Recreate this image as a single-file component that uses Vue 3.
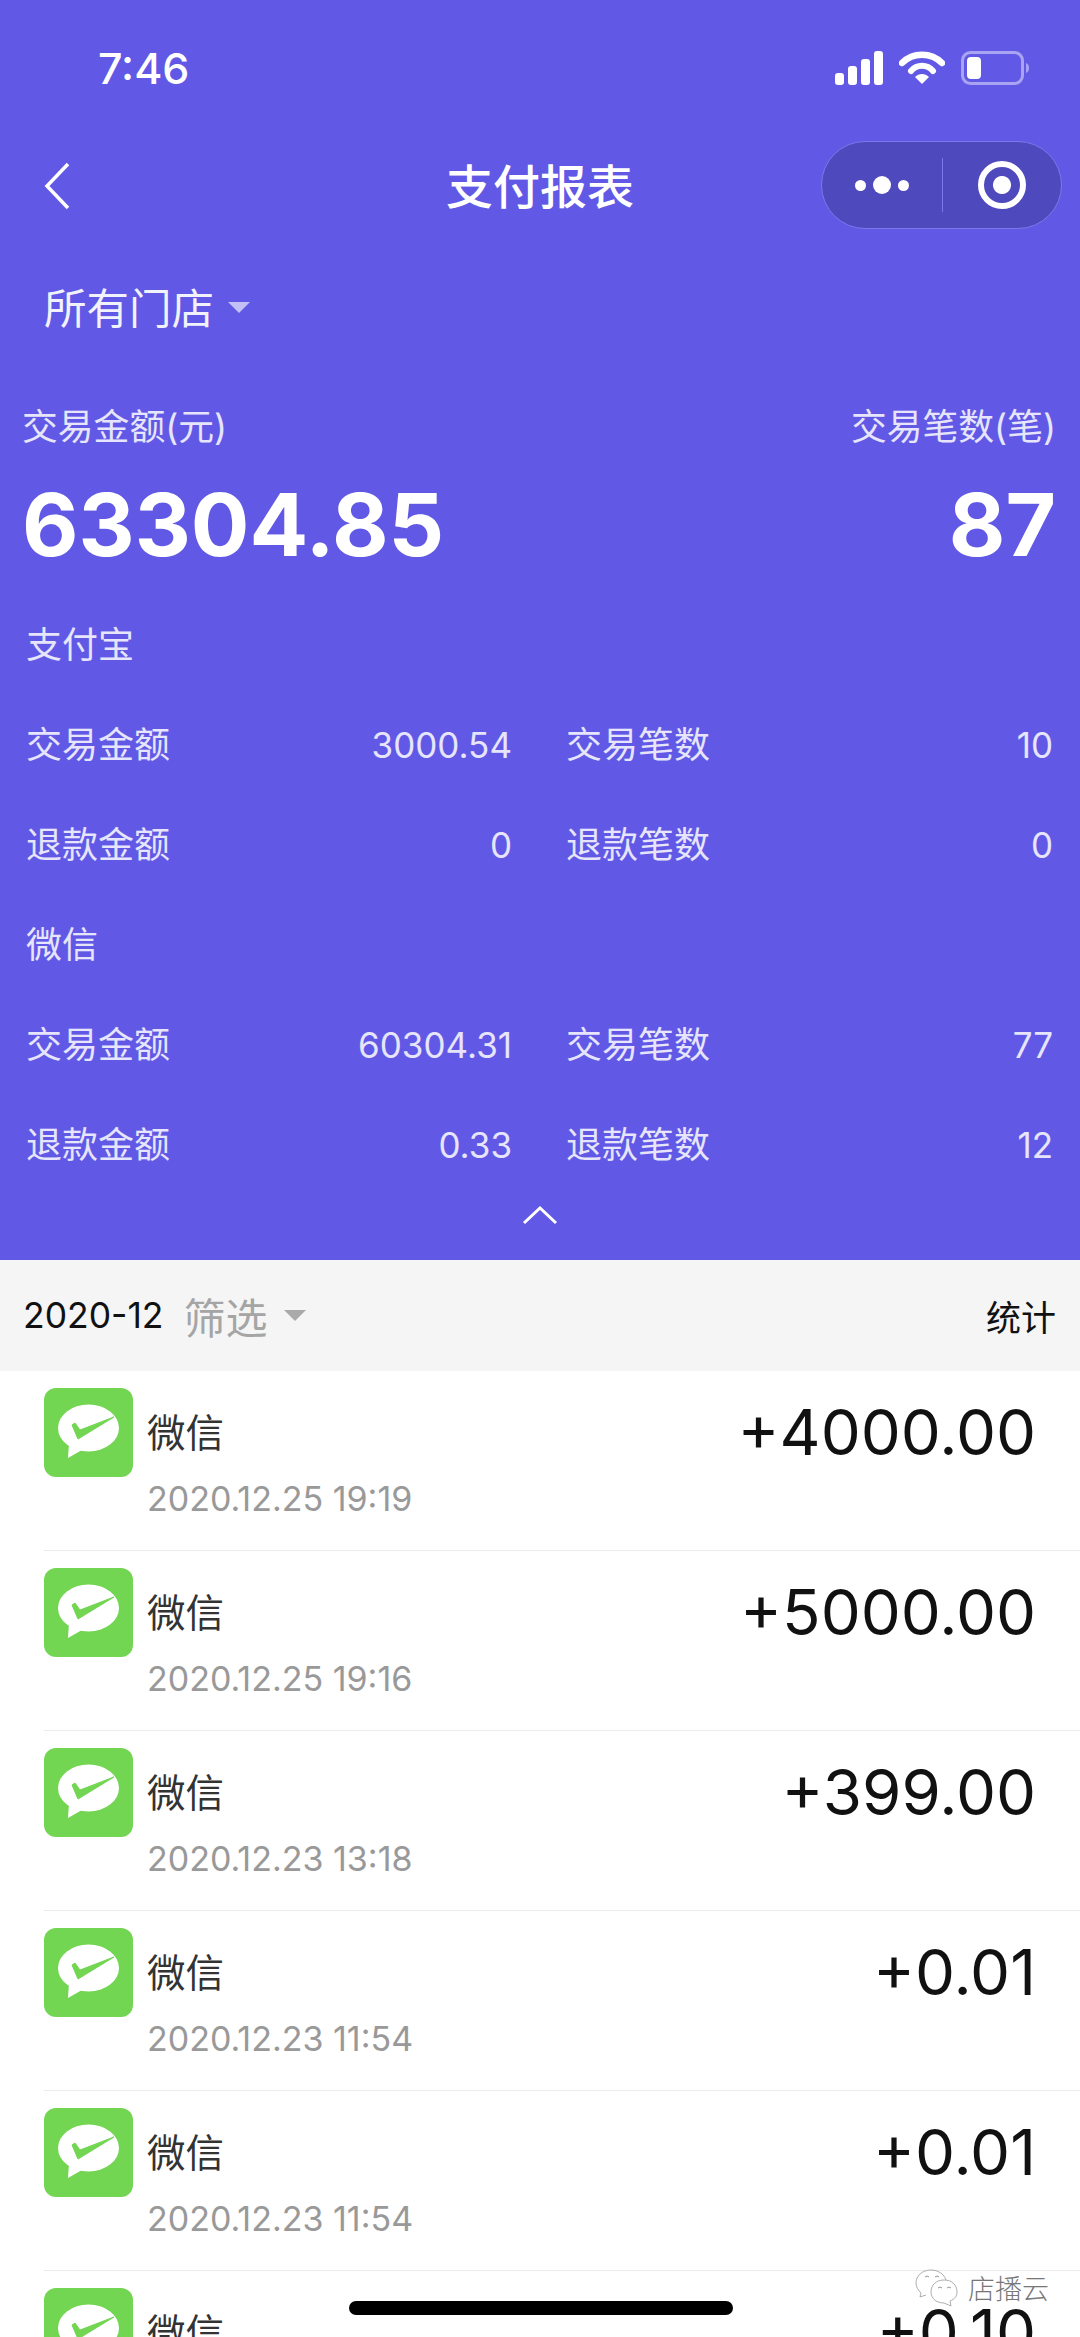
<template>
  <div class="page">
    <header class="head">
      <div class="status">
        <span class="status__time">7:46</span>
        <div class="status__icons">
          <svg width="48" height="34" viewBox="0 0 48 34">
            <rect x="0" y="22" width="9" height="12" rx="3" fill="#fff" />
            <rect x="13" y="15" width="9" height="19" rx="3" fill="#fff" />
            <rect x="26" y="8" width="9" height="26" rx="3" fill="#fff" />
            <rect x="39" y="0" width="9" height="34" rx="3" fill="#fff" />
          </svg>
          <svg width="46" height="34" viewBox="0 0 46 34">
            <path d="M3 12 C14 1 32 1 43 12" fill="none" stroke="#fff" stroke-width="6.5" stroke-linecap="round" />
            <path d="M12 20 C18 13 28 13 34 20" fill="none" stroke="#fff" stroke-width="6" stroke-linecap="round" />
            <path d="M23 33 L16 26 C20 22 26 22 30 26 Z" fill="#fff" />
          </svg>
          <svg width="70" height="34" viewBox="0 0 70 34">
            <rect x="1.5" y="1.5" width="60" height="31" rx="8" fill="none" stroke="#a8a4f3" stroke-width="3" />
            <rect x="6" y="6" width="14" height="22" rx="4" fill="#fff" />
            <path d="M65 12 C69 13 69 21 65 22 Z" fill="#a8a4f3" />
          </svg>
        </div>
      </div>

      <nav class="nav">
        <svg class="nav__back" width="28" height="50" viewBox="0 0 28 50">
          <path d="M25 3 L4 25 L25 47" fill="none" stroke="#fff" stroke-width="3.5" />
        </svg>
        <h1 class="nav__title">支付报表</h1>
        <div class="capsule">
          <div class="capsule__more">
            <i class="dot"></i><i class="dot dot--big"></i><i class="dot"></i>
          </div>
          <div class="capsule__line"></div>
          <div class="capsule__close"><i></i></div>
        </div>
      </nav>

      <div class="store">
        <span>所有门店</span>
        <i class="caret caret--light"></i>
      </div>

      <div class="total">
        <div class="total__col">
          <span class="total__label">交易金额(元)</span>
          <strong class="total__num">63304.85</strong>
        </div>
        <div class="total__col total__col--right">
          <span class="total__label">交易笔数(笔)</span>
          <strong class="total__num">87</strong>
        </div>
      </div>

      <section v-for="group in groups" :key="group.name" class="group">
        <div class="group__name">{{ group.name }}</div>
        <div v-for="row in group.rows" :key="row[0]" class="group__row">
          <div class="cell">
            <span>{{ row[0] }}</span><b>{{ row[1] }}</b>
          </div>
          <div class="cell">
            <span>{{ row[2] }}</span><b>{{ row[3] }}</b>
          </div>
        </div>
      </section>

      <div class="fold">
        <svg width="36" height="20" viewBox="0 0 36 20">
          <path d="M2 18 L18 3 L34 18" fill="none" stroke="#fff" stroke-width="3" />
        </svg>
      </div>
    </header>

    <div class="filter">
      <span class="filter__month">2020-12</span>
      <span class="filter__btn">筛选</span>
      <i class="caret"></i>
      <span class="filter__stat">统计</span>
    </div>

    <ul class="list">
      <li v-for="(item, i) in records" :key="i" class="item">
        <svg class="item__icon" viewBox="0 0 89 89">
          <rect width="89" height="89" rx="12" fill="#72d653" />
          <ellipse cx="44.5" cy="40" rx="30.5" ry="23.5" fill="#fff" />
          <path d="M25 55 L24 70 L38 62 Z" fill="#fff" />
          <path d="M28 37 L34 51 L70 29 L36 42 L31 35 Z" fill="#72d653" stroke="#72d653" stroke-width="1" stroke-linejoin="round" />
        </svg>
        <div class="item__body">
          <div class="item__name">微信</div>
          <div class="item__date">{{ item.date }}</div>
        </div>
        <div class="item__amount">{{ item.amount }}</div>
      </li>
    </ul>

    <div class="home-bar"></div>
    <div class="mark">
      <svg width="46" height="38" viewBox="0 0 46 38">
        <path d="M17 1 C8 1 2 7 2 14 C2 18 4 21 7 24 L6 28 L12 26" fill="#fff" stroke="#999" stroke-width="0.8" />
        <path d="M17 1 C24 1 30 5 32 11" fill="none" stroke="#999" stroke-width="0.8" />
        <path d="M30 11 C22 11 17 16 17 23 C17 30 23 34 30 34 L37 37 L36 32 C41 30 43 27 43 23 C43 16 38 11 30 11 Z" fill="#fff" stroke="#999" stroke-width="0.8" />
        <path d="M11 8 l2 -1 l2 1 M21 8 l2 -1 l2 1 M24 19 l2 -1 l2 1 M33 19 l2 -1 l2 1" fill="none" stroke="#777" stroke-width="0.8" />
      </svg>
      <span>店播云</span>
    </div>
  </div>
</template>

<script setup>
const groups = [
  {
    name: '支付宝',
    rows: [
      ['交易金额', '3000.54', '交易笔数', '10'],
      ['退款金额', '0', '退款笔数', '0']
    ]
  },
  {
    name: '微信',
    rows: [
      ['交易金额', '60304.31', '交易笔数', '77'],
      ['退款金额', '0.33', '退款笔数', '12']
    ]
  }
]

const records = [
  { date: '2020.12.25 19:19', amount: '+4000.00' },
  { date: '2020.12.25 19:16', amount: '+5000.00' },
  { date: '2020.12.23 13:18', amount: '+399.00' },
  { date: '2020.12.23 11:54', amount: '+0.01' },
  { date: '2020.12.23 11:54', amount: '+0.01' },
  { date: '2020.12.23 11:50', amount: '+0.10' }
]
</script>

<style>
html,
body {
  margin: 0;
  background: #fff;
}
</style>

<style scoped>
.page {
  position: relative;
  width: 1080px;
  height: 2337px;
  overflow: hidden;
  background: #fff;
  font-family: Inter, "Noto Sans CJK SC", sans-serif;
}

.head {
  height: 1260px;
  box-sizing: border-box;
  background: #6159e6;
  color: #fff;
}

.status {
  height: 136px;
  display: flex;
  align-items: center;
  justify-content: space-between;
  padding: 0 49px 0 98px;
}
.status__time {
  font-size: 43px;
  font-weight: 500;
}
.status__icons {
  display: flex;
  align-items: center;
  gap: 16px;
}

.nav {
  position: relative;
  height: 100px;
  box-sizing: border-box;
  padding-bottom: 6px;
  display: flex;
  align-items: center;
  justify-content: center;
}
.nav__back {
  position: absolute;
  left: 43px;
  top: 25px;
}
.nav__title {
  margin: 0;
  font-size: 47px;
  font-weight: 500;
}
.capsule {
  position: absolute;
  left: 821px;
  top: 5px;
  width: 241px;
  height: 88px;
  box-sizing: border-box;
  display: flex;
  align-items: center;
  background: #4f49be;
  border: 1px solid #7d77ea;
  border-radius: 44px;
}
.capsule__more {
  width: 120px;
  display: flex;
  align-items: center;
  justify-content: center;
  gap: 7px;
}
.dot {
  width: 11px;
  height: 11px;
  border-radius: 50%;
  background: #fff;
}
.dot--big {
  width: 18px;
  height: 18px;
}
.capsule__line {
  width: 1px;
  height: 54px;
  background: #7d77ea;
}
.capsule__close {
  flex: 1;
  display: flex;
  justify-content: center;
}
.capsule__close i {
  width: 48px;
  height: 48px;
  box-sizing: border-box;
  border: 6px solid #fff;
  border-radius: 50%;
  background: radial-gradient(circle, #fff 0 8.5px, transparent 9.5px);
}

.store {
  height: 144px;
  box-sizing: border-box;
  padding: 0 0 6px 44px;
  display: flex;
  align-items: center;
  gap: 14px;
  font-size: 42.5px;
  opacity: 0.92;
}
.caret {
  width: 0;
  height: 0;
  border-left: 11px solid transparent;
  border-right: 11px solid transparent;
  border-top: 11px solid #aaa;
}
.caret--light {
  border-top-color: #ccc9f8;
  margin-top: 4px;
}

.total {
  display: flex;
  justify-content: space-between;
  padding: 0 24px 0 22px;
  height: 215px;
}
.total__col {
  display: flex;
  flex-direction: column;
}
.total__col--right {
  align-items: flex-end;
}
.total__label {
  height: 48px;
  margin-top: 23px;
  line-height: 48px;
  font-size: 35.8px;
  color: #e6e5fb;
}
.total__num {
  margin-top: 29px;
  line-height: 90px;
  font-size: 87px;
  font-weight: 700;
}

.group {
  padding: 0 27px 0 26px;
}
.group__name,
.group__row {
  height: 100px;
  line-height: 100px;
  font-size: 36px;
  color: #e6e5fb;
}
.group__row {
  display: grid;
  grid-template-columns: 486px 487px;
  column-gap: 54px;
}
.cell {
  display: flex;
  justify-content: space-between;
}
.cell b {
  font-size: 35px;
  font-weight: 400;
}

.fold {
  display: flex;
  justify-content: center;
  padding-top: 10px;
}

.filter {
  height: 111px;
  display: flex;
  align-items: center;
  padding: 0 24px 0 23px;
  background: #f5f5f5;
  color: #111;
}
.filter__month {
  font-size: 35.5px;
  margin-right: 20px;
}
.filter__btn {
  font-size: 42px;
  color: #a5a5a5;
  margin-right: 16px;
}
.filter__stat {
  margin-left: auto;
  font-size: 35px;
}

.list {
  margin: 0;
  padding: 0;
  list-style: none;
}
.item {
  position: relative;
  height: 180px;
  margin-left: 44px;
  box-sizing: border-box;
  display: flex;
  align-items: flex-start;
  padding: 17px 44px 0 0;
  border-bottom: 1.5px solid #ececec;
}
.item__icon {
  flex: none;
  width: 89px;
  height: 89px;
}
.item__body {
  flex: 1;
  margin-left: 14px;
}
.item__name {
  margin-top: 19px;
  line-height: 52px;
  font-size: 38.5px;
  color: #333;
}
.item__date {
  margin-top: 18px;
  line-height: 44px;
  font-size: 34px;
  color: #999;
}
.item__amount {
  margin-top: 4px;
  line-height: 80px;
  font-size: 63.5px;
  color: #111;
}

.home-bar {
  position: absolute;
  left: 349px;
  top: 2301px;
  width: 384px;
  height: 14px;
  border-radius: 7px;
  background: #000;
}
.mark {
  position: absolute;
  left: 914px;
  top: 2268px;
  display: flex;
  align-items: center;
  gap: 8px;
  font-size: 27px;
  color: #777;
  font-weight: 300;
}
</style>
